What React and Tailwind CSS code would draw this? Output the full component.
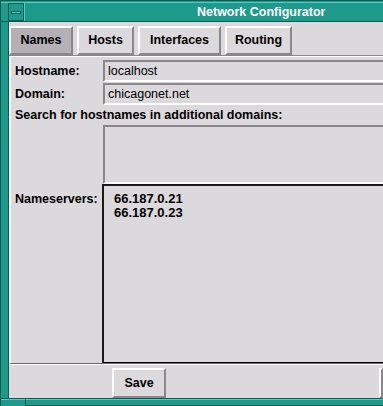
import React from 'react';

const tabs = ['Names', 'Hosts', 'Interfaces', 'Routing'];

const Raised = ({ className = '', children }) => (
  <div
    className={`flex items-center justify-center border-t-2 border-l-2 border-t-white border-l-white border-b-2 border-r-2 border-b-[#8a868a] border-r-[#8a868a] font-bold text-[12.5px] text-black ${className}`}
  >
    {children}
  </div>
);

const Sunken = ({ className = '', children }) => (
  <div
    className={`border-t-2 border-l-2 border-t-[#8a868a] border-l-[#8a868a] border-b-2 border-r-0 border-b-white ${className}`}
  >
    {children}
  </div>
);

export default function App() {
  return (
    <div className="w-[383px] h-[406px] overflow-hidden bg-[#1e9a8c] flex flex-col border-l border-t border-[#0c5c54] font-['Liberation_Sans',Arial,sans-serif]">
      {/* title bar */}
      <div className="h-[2px] border-b border-[#5cc8bc]" />
      <div className="flex h-[19px] pl-[7px] border-b border-[#0c5c54]">
        <div className="w-[16px] h-full border border-[#0c5c54] flex items-center justify-center">
          <div className="w-[10px] h-[3px] bg-[#5cc8bc] border border-[#0c5c54]" />
        </div>
        <div className="flex-1 flex items-center pl-[172px] border-l border-[#5cc8bc] text-white font-bold text-[12.5px] leading-none">
          Network Configurator
        </div>
      </div>

      {/* client */}
      <div className="flex-1 flex pl-[7px]">
        <div className="flex-1 flex flex-col bg-[#dcd9dc] border-l border-[#0c5c54]">
          {/* tabs */}
          <div className="h-[34px] flex items-start gap-[4px] pt-[4px] border-b border-[#8a868a]">
            {tabs.map((t, i) => (
              <Raised
                key={t}
                className={`h-[29px] ${i === 0 ? 'bg-[#b4b0b4] w-[64px]' : ''} ${i === 1 ? 'w-[57px]' : ''} ${i === 2 ? 'w-[83px]' : ''} ${i === 3 ? 'w-[67px]' : ''}`}
              >
                {t}
              </Raised>
            ))}
          </div>

          {/* form panel */}
          <div className="flex flex-col border-t border-white border-l-2 border-l-white border-b border-b-[#6e6a6e] pt-[3px] h-[308px]">
            <div className="flex h-[22px] items-center">
              <div className="w-[92px] pl-[4px] font-bold text-[12.5px] text-black">Hostname:</div>
              <Sunken className="flex-1 h-full flex items-center pl-[3px] text-[12.5px] text-black">localhost</Sunken>
            </div>
            <div className="flex h-[22px] items-center mt-[1px]">
              <div className="w-[92px] pl-[4px] font-bold text-[12.5px] text-black">Domain:</div>
              <Sunken className="flex-1 h-full flex items-center pl-[3px] text-[12.5px] text-black">chicagonet.net</Sunken>
            </div>
            <div className="h-[20px] flex items-center pl-[4px] font-bold text-[12.5px] text-black">
              Search for hostnames in additional domains:
            </div>
            <div className="flex h-[59px]">
              <div className="w-[92px]" />
              <Sunken className="flex-1 h-full" />
            </div>
            <div className="flex flex-1">
              <div className="w-[91px] pl-[4px] pt-[6px] font-bold text-[12.5px] text-black">Nameservers:</div>
              <div className="flex-1 border-t-2 border-l-2 border-[#1a1a1a] border-b border-b-black pl-[10px] pt-[6px] text-[13px] font-bold text-black leading-[14px]">
                <div>66.187.0.21</div>
                <div>66.187.0.23</div>
              </div>
            </div>
          </div>

          {/* bottom buttons */}
          <div className="flex-1 flex items-start pt-[3px] border-t border-white">
            <div className="w-[103px]" />
            <Raised className="w-[54px] h-[30px]">Save</Raised>
            <div className="flex-1" />
            <Raised className="w-[4px] h-[30px] border-r-0" />
          </div>
        </div>
      </div>

      {/* bottom frame */}
      <div className="h-[8px] flex border-t border-[#0c5c54]">
        <div className="w-[25px] border-t border-[#5cc8bc] border-r border-r-[#0c5c54]" />
        <div className="flex-1 border-t border-[#5cc8bc] border-b border-b-[#0c5c54]" />
      </div>
    </div>
  );
}
